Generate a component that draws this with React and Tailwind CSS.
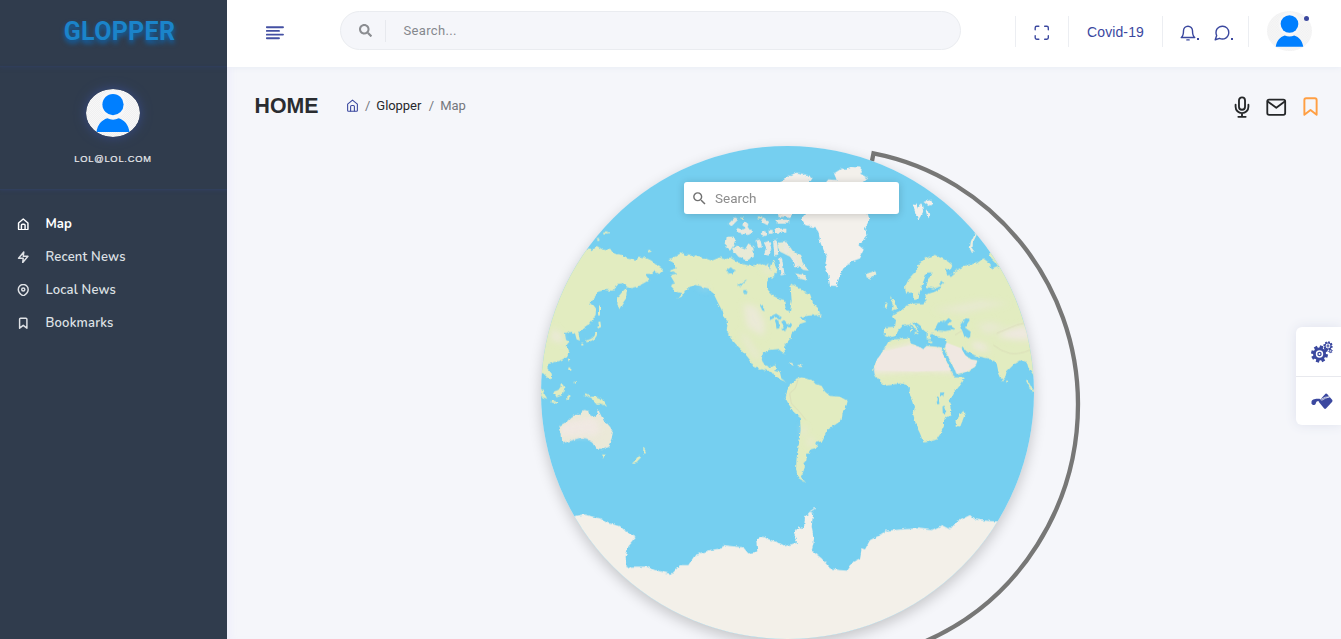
import React from "react";
import { FaSearch } from "react-icons/fa";
import { MdSearch } from "react-icons/md";

const Icon = ({ size = 14, w = 2, className = "", children }) => (
  <svg width={size} height={size} viewBox="0 0 24 24" fill="none" stroke="currentColor" strokeWidth={w} strokeLinecap="round" strokeLinejoin="round" className={`shrink-0 ${className}`}>
    {children}
  </svg>
);

const HomeGlyph = () => <><path d="M3 9.5 12 2l9 7.5V21a1.5 1.5 0 0 1-1.5 1.5h-15A1.5 1.5 0 0 1 3 21z" /><path d="M8.5 22V14a2 2 0 0 1 2-2h3a2 2 0 0 1 2 2v8" /></>;
const BookmarkGlyph = () => <path d="M19 21.5l-7-5.5-7 5.5V4.5a2 2 0 0 1 2-2h10a2 2 0 0 1 2 2z" />;

function Avatar({ className, id }) {
  return (
    <svg viewBox="0 0 54 48" preserveAspectRatio="none" className={className}>
      <defs>
        <pattern id={id} width="2" height="2" patternUnits="userSpaceOnUse">
          <rect width="2" height="2" fill="#f7f7f7" /><rect width="1" height="1" fill="#f0f0f1" /><rect x="1" y="1" width="1" height="1" fill="#f0f0f1" />
        </pattern>
      </defs>
      <ellipse cx="27" cy="24" rx="27" ry="24" fill={`url(#${id})`} />
      <ellipse cx="27" cy="15.5" rx="13" ry="14" fill="#f7f7f8" />
      <circle cx="27" cy="15.6" r="10.6" fill="#007fff" />
      <path d="M10.5 43C11.500 36 15.500 31 21.300 29.300Q27 32 32.700 29.300C38.500 31 42.500 36 43.500 43Z" fill="#007fff" />
    </svg>
  );
}

const nav = [
  { label: "Map", active: true, glyph: <HomeGlyph /> },
  { label: "Recent News", glyph: <path d="M13 2 3 14h9l-1 8 10-12h-9z" /> },
  { label: "Local News", glyph: <><path d="M21.500 10.500c0 7-9.500 12.500-9.500 12.500S2.500 17.500 2.500 10.500a9.500 9.500 0 0 1 19 0z" /><circle cx="12" cy="10.500" r="3" /></> },
  { label: "Bookmarks", glyph: <BookmarkGlyph /> },
];

function Sidebar() {
  return (
    <aside className="relative z-10 flex w-[227px] shrink-0 flex-col overflow-hidden bg-[#303c4d]">
      <div className="flex h-[67px] items-center justify-center border-b border-[#303e5a] pb-[3px] pl-3 shadow-[0_0_4px_#303e5e]">
        <span className="font-['Roboto'] text-[25px] leading-none font-bold tracking-[0.3px] text-[#1b84ca] [text-shadow:0_3px_5px_#0c68b5]">GLOPPER</span>
      </div>
      <div className="flex h-[123px] flex-col items-center border-b border-[#303f5c] pt-[22px] pr-[1px] shadow-[0_1px_3px_#303e5a]">
        <Avatar id="check-a" className="h-12 w-[54px] rounded-[50%] shadow-[0_0_12px_#374a86]" />
        <span className="mt-[15px] text-[9.300px] leading-[14px] tracking-[0.8px] text-[#e8eaee] [-webkit-text-stroke:0.2px_#e8eaee]">LOL@LOL.COM</span>
      </div>
      <nav className="flex flex-col pt-[17px]">
        {nav.map((n) => (
          <a key={n.label} className={`flex h-[33px] items-center pl-[17px] font-['Nunito','Open_Sans',sans-serif] text-[13px] ${n.active ? "font-bold text-white" : "font-semibold tracking-[0.2px] text-[#dfe2e6]"}`}>
            <Icon size={12.500} w={2.800} className="mt-px mr-4">{n.glyph}</Icon>
            <span className="pt-0.5">{n.label}</span>
          </a>
        ))}
      </nav>
    </aside>
  );
}

function Header() {
  return (
    <header className="flex h-[67px] shrink-0 bg-white text-[#3b489f] shadow-[0_1px_6px_#e9edf5]">
      <div className="flex w-[113px] pt-[26px] pl-[39px]">
        <svg width="18" height="14" viewBox="0 0 18 14" stroke="#4450a3" strokeWidth="1.9" strokeLinecap="round"><path d="M.8 1.200H17M.8 4.900H13M.8 8.600H17M.8 12.200H13" /></svg>
      </div>
      <div className="mt-[11px] flex h-[39px] w-[621px] items-center rounded-full border border-[#eaecf0] bg-[#f5f6fa] pl-[18px]">
        <FaSearch size={13} color="#8b8d91" />
        <span className="ml-[12.500px] h-[22px] w-px bg-[#e7e9ee]" />
        <span className="ml-[18px] font-['Roboto'] text-[13px] tracking-[0.35px] text-[#85888e]">Search...</span>
      </div>
      <div className="ml-[54px] flex h-[31px] flex-1 pt-4">
        <div className="flex h-[31px] w-[53px] items-center justify-center border-l border-[#eceef2] pt-0.5"><Icon size={17.500} w={1.900}><path d="M8 3H5a2 2 0 0 0-2 2v3M21 8V5a2 2 0 0 0-2-2h-3M3 16v3a2 2 0 0 0 2 2h3M16 21h3a2 2 0 0 0 2-2v-3" /></Icon></div>
        <div className="flex h-[31px] w-[94px] items-center justify-center border-l border-[#eceef2] pt-0.5 text-[14px] tracking-[0.1px]">Covid-19</div>
        <div className="flex h-[31px] w-[86px] items-center border-l border-[#eceef2] pt-0.5 pl-4">
          <Icon size={18} w={1.900}><path d="M18 9A6 6 0 0 0 6 9c0 7-3 9-3 9h18s-3-2-3-9" /><path d="M10.500 21.200h3" /></Icon>
          <span className="mt-[13px] size-0.5 bg-[#3b489f]" />
          <Icon size={18} w={1.900} className="ml-3.5"><path d="M21 11.500a8.400 8.400 0 0 1-.9 3.800 8.500 8.500 0 0 1-7.600 4.700 8.400 8.400 0 0 1-3.800-.9L3 21l1.900-5.700a8.400 8.400 0 0 1-.9-3.800 8.500 8.500 0 0 1 4.700-7.600 8.400 8.400 0 0 1 3.800-.9h.5a8.500 8.500 0 0 1 8 8z" /></Icon>
          <span className="mt-[13px] size-0.5 bg-[#3b489f]" />
        </div>
        <div className="relative flex h-[31px] border-l border-[#eceef2] pl-[18px]">
          <Avatar id="check-b" className="mt-[-5px] h-10 w-[45px]" />
          <span className="absolute top-0 right-[3px] size-[5px] rounded-full bg-[#3b489f]" />
        </div>
      </div>
    </header>
  );
}

const P = ({ d, ...rest }) => <polygon points={d} {...rest} />;

function WorldMap() {
  return (
    <svg viewBox="33 18 1479 1479" className="size-full rounded-full">
      <defs>
        <filter id="coast" x="0" y="0" width="1540" height="1540" filterUnits="userSpaceOnUse">
          <feTurbulence type="fractalNoise" baseFrequency="0.07" numOctaves="3" seed="4" />
          <feDisplacementMap in="SourceGraphic" scale="11" xChannelSelector="R" yChannelSelector="G" />
        </filter>
        <filter id="soft" x="-30%" y="-30%" width="160%" height="160%"><feGaussianBlur stdDeviation="10" /></filter>
        <clipPath id="afr"><path d="M1075 605l13-7h50l5 12 22 10 15 8 10-10 45 4 3 18 17 35 20 37h30l-10 18-25 30-12 25 7 15-3 25-20 15v18l-10 22-12 18-20 7-20 2-10-27-10-20-10-35 5-25-7-20-10-18 2-20-10-7-20-5-25 5-20 3-15-13-18-23-2-14 10-28 18-25z" /></clipPath>
        <clipPath id="arabia"><path d="M1250 608l45 17 10 20 15 13 22 4-7 18-25 15-30 7-10-22-15-30-15-20z" /></clipPath>
        <clipPath id="aus"><path d="M94 862l34-26 28-4 26-2 15 10 12-18 13 28 16 22 5 27-10 34-16 6-18-4-10-16-20-12-22-3-43 13-8-5z" /></clipPath>
      </defs>
      <rect width="1540" height="1540" fill="#75cff0" />
      <g filter="url(#coast)" fill="#e2ecc0">
        {/* East Asia and the western Pacific */}
        <P d="0,335 172,328 185,330 200,318 215,327 232,332 240,325 250,340 275,345 290,355 320,362 325,350 345,352 365,362 375,372 395,385 400,390 388,402 372,393 365,402 345,402 358,420 340,430 320,440 300,445 275,430 262,432 255,450 245,452 225,450 205,455 195,470 178,488 190,495 198,505 197,525 180,550 165,560 145,578 150,602 140,598 135,580 122,575 105,582 108,600 118,605 110,615 118,635 110,650 95,660 70,668 55,672 52,685 65,700 66,715 58,718 40,700 0,690" />
        <P d="293,440 290,455 288,475 278,490 267,508 262,490 265,470 280,452" />
        <path d="M199 578q0 20-30 26M208 545l2 14-7 4M207 496v30M117 656l1 10M118 682v10M134 722v8M115 765v12M165 762l14 8M62 784l22 4M157 608v8M220 277h16M202 300h6M354 334l10-2" stroke="#e2ecc0" strokeWidth="6" fill="none" />
        <P d="70,755 85,750 98,732 104,745 98,765 80,772" /><P d="30,740 52,776 38,772 28,755" />
        <P d="178,770 200,770 215,777 232,800 210,790 195,793 190,778" />
        <P d="88,858 110,845 125,830 140,822 152,825 158,810 178,813 180,825 195,835 205,810 215,830 222,840 240,860 249,875 245,895 235,920 220,927 200,925 190,908 170,895 150,893 130,900 97,910 95,885" fill="#ebe9d8" />
        <P d="216,943 228,944 222,956" /><P d="340,921 348,935 340,944" /><P d="328,945 333,952 315,971 306,971" />
        {/* North America */}
        <P d="415,360 435,350 455,338 462,345 490,348 520,353 545,362 570,352 585,358 600,352 625,368 660,378 690,372 705,380 715,370 720,390 730,360 742,395 728,415 715,412 708,440 718,455 730,468 745,475 762,480 768,510 780,515 785,482 781,430 805,442 820,455 840,462 850,490 865,505 872,525 835,527 810,532 830,545 810,552 800,565 785,580 780,600 762,620 766,643 758,640 750,627 720,630 700,635 695,655 703,675 718,682 736,672 738,685 732,692 750,697 754,715 770,727 750,718 735,705 715,693 695,688 672,680 660,660 640,635 620,615 598,590 590,570 594,545 580,530 575,510 565,490 555,470 548,455 535,445 515,440 495,435 480,440 465,455 455,470 442,475 455,460 438,455 420,435 435,430 420,405 440,400 415,392 440,385 435,370" />
        <g fill="#e8ead7">
          <P d="590,290 612,290 618,305 600,332 586,320" />
          <P d="605,325 620,318 645,328 655,310 670,320 672,350 650,362 625,350" />
          <P d="750,305 768,303 790,335 810,345 822,375 838,392 820,390 795,370 780,350 750,335 742,318" />
          <P d="795,400 825,405 832,422 808,415" />
          <path d="M600 255l20-20M620 270l22 5 14-10M640 250l12 10M695 240l20 10M700 275l5 12M740 245h35M735 272h34M685 300l5 20M710 305l8 18-8 22M735 300l4 45M765 305l5 35M745 225h30M650 280l15-6M722 270v14M750 355l8 50M790 350l10 30" stroke="#e9e9df" strokeWidth="12" fill="none" />
        </g>
        <path d="M632 233h10M683 232h14M870 527l4 4M780 670l8 4M803 678h14" stroke="#e5eacb" strokeWidth="6" />
        {/* Greenland and the high Arctic */}
        <g fill="#f3f0eb">
          <P d="885,130 895,118 920,120 912,100 935,85 945,90 962,80 990,82 1000,95 990,100 1015,115 990,130 1005,150 1010,205 1018,240 1005,265 1010,290 985,315 1002,330 990,355 965,365 940,385 930,405 920,438 900,437 895,405 885,380 890,350 872,310 865,275 855,262 825,255 815,235 830,215 870,150" />
          <P d="745,130 758,122 770,106 785,108 800,98 820,102 845,113 835,130 810,170 780,235 752,225 752,150" />
          <P d="1148,195 1160,190 1163,205 1175,190 1180,215 1165,240 1155,215" /><P d="1180,185 1205,180 1208,190 1195,198" /><path d="M1190 210l5 20" stroke="#f3f0eb" strokeWidth="6" />
          <path d="M1338 280l-12 25-3 20 6 12" stroke="#eceee0" strokeWidth="7" fill="none" />
        </g>
        <P d="1008,402 1035,393 1040,402 1022,415 1010,412" fill="#e9ecd8" />
        {/* South America */}
        <P d="800,715 815,712 845,720 855,730 875,738 885,755 900,768 930,770 953,783 950,795 938,815 935,840 915,855 898,862 885,885 875,905 855,908 862,922 842,928 840,940 828,942 830,960 820,970 825,980 818,1000 812,1010 828,1028 805,1014 798,990 800,950 807,910 812,870 810,832 790,815 775,790 767,775 772,750 785,730" />
        {/* Africa and Eurasia */}
        <g transform="translate(750 0)">
          <P d="325,605 340,598 388,595 393,610 415,620 430,628 440,618 485,622 488,640 505,675 525,712 555,712 545,730 520,760 508,785 515,800 512,825 492,840 492,858 482,880 470,898 450,905 430,907 420,880 410,860 400,825 405,800 398,780 388,762 390,742 380,735 360,730 335,735 315,738 300,725 282,702 280,688 290,660 308,635" />
          <P d="550,812 554,825 540,862 530,860 530,840 540,825" />
          <P d="375,440 385,420 400,405 415,375 435,355 465,345 480,352 500,362 517,375 510,390 495,385 502,407 515,402 525,392 560,375 590,370 610,355 630,370 635,388 655,380 645,365 630,350 625,320 800,320 800,750 770,720 745,682 740,665 725,660 700,675 680,695 675,715 668,724 655,695 650,670 640,665 625,655 600,650 580,645 560,635 545,625 555,645 570,658 592,662 585,680 560,695 530,702 520,680 505,650 490,630 500,612 498,595 470,592 460,582 450,585 455,597 440,598 440,578 430,570 425,560 410,548 400,548 418,575 408,570 395,553 385,555 365,558 355,568 345,588 330,593 314,588 315,562 345,560 348,540 335,530 345,520 365,510 380,496 405,490 430,490 440,480 435,465 465,455 480,445 495,430 490,437 460,445 438,440 445,420 455,397 440,398 428,430 420,455 415,475 402,480 395,457 378,460" />
          <P d="330,468 345,485 352,505 335,512 338,495" /><P d="315,490 323,490 320,504 311,502" />
          <path d="M393 568v8M392 558v5M404 578l8 2M445 604h12M680 722l3 6M740 720l18 35" stroke="#e2ecc0" strokeWidth="5" />
        </g>
        <P d="0,1540 0,1130 130,1130 160,1123 210,1135 230,1148 270,1158 285,1172 320,1190 295,1220 287,1250 290,1285 305,1280 350,1280 375,1290 425,1302 450,1275 475,1275 495,1245 540,1230 575,1225 580,1215 640,1222 655,1240 682,1235 678,1195 695,1190 750,1210 765,1218 802,1208 790,1185 805,1160 822,1165 825,1130 840,1115 850,1120 845,1160 852,1200 845,1232 875,1255 900,1285 930,1290 952,1292 970,1265 990,1255 995,1225 1005,1228 1020,1200 1050,1185 1070,1172 1160,1165 1205,1170 1235,1155 1260,1168 1280,1145 1320,1125 1335,1138 1380,1143 1540,1150 1540,1540" fill="#f3f0e9" />
        <path d="M842 1112l12-8" stroke="#f3f0e9" strokeWidth="4" />
      </g>
      {/* Dry and high regions */}
      <g clipPath="url(#aus)"><P d="80,850 125,842 195,832 212,870 200,885 90,890" fill="#f0e8e2" filter="url(#soft)" /></g>
      <g clipPath="url(#arabia)"><P d="1240,600 1350,620 1350,700 1270,705" fill="#f0e8e2" /></g>
      <g filter="url(#soft)" fill="#eee8df">
        <P d="1400,590 1430,570 1490,555 1512,600 1460,600" /><P d="1325,605 1360,610 1380,635 1330,625" />
        <P d="1210,510 1350,480 1440,490 1300,520" opacity=".5" /><P d="1340,555 1380,545 1430,560 1370,585" opacity=".5" /><P d="640,490 680,500 705,550 700,590 650,560" opacity=".7" />
        <P d="630,570 650,590 690,650 680,660 645,610" opacity=".6" />
        <P d="695,382 728,387 715,402" opacity=".8" /><P d="70,560 100,590 100,610 60,600" opacity=".7" /><P d="500,438 530,440 535,450" opacity=".7" />
        <P d="818,855 828,865 822,885 818,890" /><P d="835,895 850,897 846,915 832,915" opacity=".8" />
      </g>
      <g clipPath="url(#afr)"><path d="M1020 620l60 8 60-18 95 8 40 80-90-6-155 8z" fill="#f0e8e2" filter="url(#soft)" /><path d="M1035 690l25-55 80-18 90 12 30 62-100 4z" fill="#f0e8e2" /></g>
      <g fill="none" stroke="#d5d4b4" strokeWidth="3" opacity=".5"><path d="M804 720l-8 25-17 15 5 30 24 25 20 25M1390 615q25 20 50 25t60-10M1400 580l60-25 45-10M1300 570l-25 15M1260 690l10 20" /></g>
      {/* Inland waters */}
      <g filter="url(#coast)" fill="#75cff0">
        <P d="588,392 602,382 618,392 600,402" /><P d="622,435 652,422 640,432 625,441" /><P d="690,492 698,495 704,514 696,510" />
        <path d="M718 536l20-10 15 10M740 538l4 28M757 543l10 12-6 10M755 566l14-2M770 558l15-5M640 455h12" stroke="#75cff0" strokeWidth="9" fill="none" />
        <P d="1213,570 1224,548 1240,545 1255,533 1266,543 1252,552 1274,568 1245,573" />
        <P d="1290,550 1310,535 1316,545 1305,563 1322,575 1320,595 1302,587 1295,567" />
        <P d="1230,758 1243,757 1240,770 1231,768" />
        <path d="M1221 770l4 22M1241 798l1 22M1238 630l12 25 23 42" stroke="#75cff0" strokeWidth="7" fill="none" />
        <path d="M1298 625l12 17 20 5" stroke="#75cff0" strokeWidth="7" fill="none" />
        <path d="M1303 540h18M1230 435l10-10M1260 408l10-8" stroke="#75cff0" strokeWidth="8" />
      </g>
    </svg>
  );
}

function Globe() {
  return (
    <section className="relative ml-[314px] h-[493px] w-[540px]">
      <svg width="540" height="493" viewBox="541 146 540 493" fill="none" className="absolute inset-0">
        <path d="M872 161L873.500 153.300C994 177 1078 285 1078 404C1078 505 1020 600 926 641" stroke="#777776" strokeWidth="4.300" />
      </svg>
      <div className="absolute top-0 left-0 size-[493px] rounded-full shadow-[0_5px_14px_rgba(0,0,0,0.2)]"><WorldMap /></div>
      <div className="absolute top-9 left-[143px] flex h-8 w-[215px] items-center rounded-[3px] bg-white pl-[7px] shadow-[0_1px_8px_rgba(0,0,0,0.18)]">
        <MdSearch size={17} color="#707070" />
        <span className="ml-[7px] font-['Roboto'] text-[13.500px] text-[#8c8c8c]">Search</span>
      </div>
    </section>
  );
}

const Gear = ({ x, y, r, hole, teeth }) => (
  <g transform={`translate(${x} ${y})`}>
    {Array.from({ length: teeth }, (_, i) => <rect key={i} x={-r * 0.2} y={-r} width={r * 0.4} height={r * 0.5} transform={`rotate(${(i * 360) / teeth + 15})`} />)}
    <circle r={r * 0.76} /><circle r={hole} fill="#fff" /><circle r={hole * 0.6} /><circle r={hole * 0.25} fill="#fff" />
  </g>
);

function QuickTools() {
  return (
    <div className="fixed top-[327px] right-0 flex h-[98px] w-[45px] flex-col rounded-l-md bg-white shadow-[0_0_12px_#dfe2ee]">
      <div className="flex h-[50px] items-center border-b border-[#e8e9ee] pl-[15px]">
        <svg width="23" height="22" viewBox="0 0 23 22" fill="#3b489f"><Gear x={8.500} y={13} r={8.500} hole={3.700} teeth={8} /><Gear x={17} y={5} r={4.700} hole={2.400} teeth={8} /><Gear x={19.500} y={10} r={2.200} hole={0.900} teeth={6} /></svg>
      </div>
      <div className="flex h-12 items-center pl-[14px]">
        <svg width="23" height="17" viewBox="0 0 23 17" fill="#3b489f"><path d="M8.500 8.500L15.500.8Q16.400.3 17.300 1.200L22.300 7Q22.800 8 22 8.900L16 15.500Q15 16.300 14.200 15.500Z" /><path d="M11 6.200C7 5 1.500 6 1.500 9a2.200 2.200 0 1 0 4.300 1.500C6.500 8 8 7.600 10 8.500Z" /><path d="M10.500 6.600q5-3.400 9-2.700-4 .8-8 3.500" fill="none" stroke="#fff" strokeWidth=".7" /></svg>
      </div>
    </div>
  );
}

export default function App() {
  return (
    <div className="flex h-[639px] w-full overflow-hidden bg-[#f5f6fa] font-['Liberation_Sans',Arial,sans-serif]">
      <Sidebar />
      <main className="flex min-w-0 flex-1 flex-col shadow-[inset_7px_0_7px_-3px_#efeffb]">
        <Header />
        <div className="flex h-[79px] shrink-0 items-center pr-5 pb-0.5 pl-[27.500px]">
          <h1 className="w-[91.500px] pt-0.5 text-[21.300px] leading-none font-bold text-[#2a2c30]">HOME</h1>
          <div className="flex items-center font-['Roboto'] text-[13px] tracking-[-0.05px] text-[#74777d]">
            <Icon size={13} w={2} className="mr-[6px] text-[#3b489f]"><HomeGlyph /></Icon>
            <span>/</span><span className="ml-[6px] text-[#26282c]">Glopper</span><span className="ml-[7.500px]">/</span><span className="ml-[6px]">Map</span>
          </div>
          <div className="ml-auto flex items-center pt-0.5 text-[#252729]">
            <Icon size={22} w={2}><path d="M12 1.500a3.300 3.300 0 0 0-3.300 3.300v6.900a3.300 3.300 0 0 0 6.600 0V4.800A3.300 3.300 0 0 0 12 1.500z" /><path d="M19 9.500v2.200a7 7 0 0 1-14 0V9.500M12 19v3.700M8 22.700h8" /></Icon>
            <Icon size={22} w={2} className="ml-3"><rect x="2.500" y="4" width="19.500" height="16.500" rx="2" /><path d="M3 6l9.300 6.800L21.500 6" /></Icon>
            <Icon size={21} w={2.200} className="ml-[13.500px] text-[#ff9f43]"><BookmarkGlyph /></Icon>
          </div>
        </div>
        <Globe />
      </main>
      <QuickTools />
    </div>
  );
}
